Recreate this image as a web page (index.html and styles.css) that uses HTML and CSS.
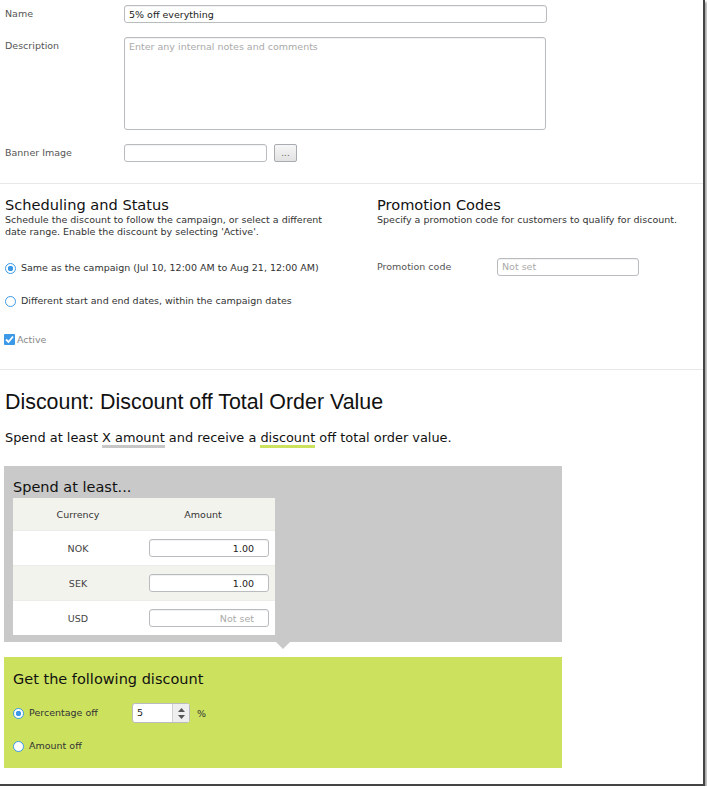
FILE: index.html
```html
<!DOCTYPE html>
<html lang="en">
<head>
    <meta charset="UTF-8">
    <title>Discount</title>
    <link rel="stylesheet" href="styles.css">
</head>
<body>
    <div class="page">
        <div class="general">
            <div class="field">
                <label>Name</label>
                <input type="text" class="text wide" value="5% off everything">
            </div>
            <div class="field">
                <label>Description</label>
                <textarea class="text notes" placeholder="Enter any internal notes and comments"></textarea>
            </div>
            <div class="field">
                <label>Banner Image</label>
                <input type="text" class="text short">
                <button class="browse">...</button>
            </div>
        </div>

        <div class="settings">
            <div class="column">
                <h2>Scheduling and Status</h2>
                <p class="intro">Schedule the discount to follow the campaign, or select a different date range. Enable the discount by selecting 'Active'.</p>
                <label class="option first"><input type="radio" name="dates" checked> Same as the campaign (Jul 10, 12:00 AM to Aug 21, 12:00 AM)</label>
                <label class="option"><input type="radio" name="dates"> Different start and end dates, within the campaign dates</label>
                <label class="check"><input type="checkbox" checked>Active</label>
            </div>
            <div class="column">
                <h2>Promotion Codes</h2>
                <p class="intro">Specify a promotion code for customers to qualify for discount.</p>
                <div class="promo">
                    <label>Promotion code</label>
                    <input type="text" class="text code" placeholder="Not set">
                </div>
            </div>
        </div>

        <div class="discount">
            <h1>Discount: Discount off Total Order Value</h1>
            <p class="summary">Spend at least <span class="mark condition">X amount</span> and receive a <span class="mark reward">discount</span> off total order value.</p>

            <div class="box spend">
                <h3>Spend at least...</h3>
                <table class="amounts">
                    <thead>
                        <tr><th>Currency</th><th>Amount</th></tr>
                    </thead>
                    <tbody>
                        <tr><td>NOK</td><td><input type="text" class="text money" value="1.00"></td></tr>
                        <tr class="alt"><td>SEK</td><td><input type="text" class="text money" value="1.00"></td></tr>
                        <tr><td>USD</td><td><input type="text" class="text money" placeholder="Not set"></td></tr>
                    </tbody>
                </table>
            </div>

            <div class="box get">
                <h3>Get the following discount</h3>
                <div class="choice">
                    <label class="option"><input type="radio" name="kind" checked> Percentage off</label>
                    <div class="spin">
                        <span class="spin-value">5</span>
                        <span class="spin-buttons">
                            <svg width="7" height="4" viewBox="0 0 7 4"><path d="M3.5 0 L7 4 L0 4 Z" fill="#555"/></svg>
                            <svg width="7" height="4" viewBox="0 0 7 4"><path d="M0 0 L7 0 L3.5 4 Z" fill="#555"/></svg>
                        </span>
                    </div>
                    <span class="unit">%</span>
                </div>
                <div class="choice">
                    <label class="option"><input type="radio" name="kind"> Amount off</label>
                </div>
            </div>
        </div>
    </div>
</body>
</html>
```

FILE: styles.css
```css
body {
    margin: 0;
    background-color: #fff;
    font-family: "DejaVu Sans", Verdana, sans-serif;
    font-size: 9.5px;
    color: #333;
}
.page {
    width: 703px;
    height: 784px;
    background-color: #fff;
    border-right: 2px solid #444;
    border-bottom: 2px solid #444;
    box-shadow: 2px 2px 2px rgba(0, 0, 0, 0.35);
    overflow: hidden;
}
.text {
    box-sizing: border-box;
    height: 18px;
    border: 1px solid #b9bcbf;
    border-radius: 3px;
    padding: 0 4px;
    font-family: "DejaVu Sans", Verdana, sans-serif;
    font-size: 9.5px;
    color: #222;
    background-color: #fff;
    box-shadow: inset 0 1px 1px rgba(0, 0, 0, 0.06);
}
.text::placeholder {
    color: #aaa;
}
.general {
    padding: 5px 0 21px 5px;
    border-bottom: 1px solid #e8e8e8;
}
.field {
    display: flex;
    align-items: flex-start;
    margin-bottom: 14px;
}
.field:last-child {
    margin-bottom: 0;
}
.field label {
    width: 119px;
    line-height: 18px;
    color: #555;
}
.wide {
    width: 423px;
}
.notes {
    width: 422px;
    height: 93px;
    padding: 3px 4px;
    resize: none;
}
.short {
    width: 143px;
}
.browse {
    box-sizing: border-box;
    width: 23px;
    height: 18px;
    margin-left: 7px;
    padding: 0;
    border: 1px solid #a8acb0;
    border-radius: 2px;
    background: linear-gradient(#f6f6f6, #e2e2e2);
    font-family: "DejaVu Sans", Verdana, sans-serif;
    font-size: 9px;
    color: #666;
}
.settings {
    display: flex;
    padding: 12px 0 24px 5px;
    border-bottom: 1px solid #e8e8e8;
}
.column {
    width: 372px;
}
.column + .column {
    width: 320px;
}
h2 {
    margin: 0;
    font-size: 14.6px;
    font-weight: normal;
    line-height: 18px;
    color: #111;
}
.intro {
    margin: 0;
    line-height: 11.5px;
    color: #333;
}
.column:first-child .intro {
    width: 336px;
}
.option {
    display: flex;
    align-items: center;
    gap: 5px;
    line-height: 12px;
}
.settings .option.first {
    margin-top: 25px;
}
.settings .option + .option {
    margin-top: 21px;
}
input[type="radio"] {
    appearance: none;
    box-sizing: border-box;
    width: 11px;
    height: 11px;
    margin: 0;
    border: 1.5px solid #3b99e8;
    border-radius: 50%;
    background-color: #fff;
}
input[type="radio"]:checked {
    background: radial-gradient(circle, #3b99e8 0, #3b99e8 2.5px, #fff 3px);
}
.check {
    display: flex;
    align-items: center;
    margin-top: 27px;
    margin-left: -1px;
    color: #888;
}
input[type="checkbox"] {
    appearance: none;
    width: 11px;
    height: 11px;
    margin: 0 2px 0 0;
    border-radius: 1px;
    background: #3b99e8 url("data:image/svg+xml;utf8,<svg xmlns='http://www.w3.org/2000/svg' viewBox='0 0 11 11'><path d='M2 5.5 L4.5 8 L9 2.5' fill='none' stroke='white' stroke-width='1.8'/></svg>") no-repeat center;
}
.promo {
    display: flex;
    align-items: center;
    margin-top: 32px;
}
.promo label {
    width: 120px;
    color: #555;
}
.code {
    width: 142px;
}
.discount {
    padding: 19px 0 0 4px;
}
h1 {
    margin: 0 0 0 1px;
    font-family: "Liberation Sans", Arial, sans-serif;
    font-size: 21.4px;
    font-weight: normal;
    line-height: 26px;
    color: #111;
}
.summary {
    margin: 14px 0 0 1px;
    font-size: 12.9px;
    line-height: 18px;
    color: #111;
}
.mark {
    border-bottom: 3px solid;
}
.condition {
    border-color: #c6c7c6;
}
.reward {
    border-color: #cce25f;
}
.box {
    position: relative;
    box-sizing: border-box;
    width: 558px;
    padding: 11px 0 0 9px;
}
.box h3 {
    margin: 0;
    font-size: 14.5px;
    font-weight: normal;
    line-height: 21px;
    color: #111;
}
.spend {
    margin-top: 19px;
    height: 176px;
    background-color: #c8c9c8;
}
.spend::after {
    content: "";
    position: absolute;
    left: 272px;
    bottom: -7px;
    border-left: 7px solid transparent;
    border-right: 7px solid transparent;
    border-top: 7px solid #c8c9c8;
}
.amounts {
    width: 262px;
    border-collapse: collapse;
    background-color: #fff;
}
.amounts th {
    height: 32px;
    padding: 0;
    font-weight: normal;
    color: #333;
    background-color: #f3f3ee;
}
.amounts th + th {
    padding-right: 12px;
}
.amounts td {
    height: 34px;
    padding: 0;
    text-align: center;
    border-top: 1px solid #ecece8;
    color: #444;
}
.amounts th:first-child,
.amounts td:first-child {
    width: 130px;
}
.amounts .alt td {
    background-color: #f3f3ee;
}
.money {
    width: 120px;
    text-align: right;
    padding-right: 14px;
}
.get {
    margin-top: 15px;
    height: 111px;
    background-color: #cce25f;
}
.get h3 {
    line-height: 23px;
    margin-bottom: 12px;
}
.choice {
    display: flex;
    align-items: center;
    height: 20px;
    margin-bottom: 13px;
}
.choice .option {
    width: 119px;
}
.spin {
    display: flex;
    box-sizing: border-box;
    width: 58px;
    height: 20px;
    border: 1px solid #b9bcbf;
    border-radius: 3px;
    background-color: #fff;
}
.spin-value {
    flex: 1;
    padding-left: 4px;
    line-height: 18px;
    color: #222;
}
.spin-buttons {
    display: flex;
    flex-direction: column;
    justify-content: center;
    align-items: center;
    gap: 3px;
    width: 16px;
    border-left: 1px solid #d0d0d0;
    background-color: #eee;
}
.spin-buttons svg {
    display: block;
}
.unit {
    margin-left: 7px;
    color: #333;
}
```
